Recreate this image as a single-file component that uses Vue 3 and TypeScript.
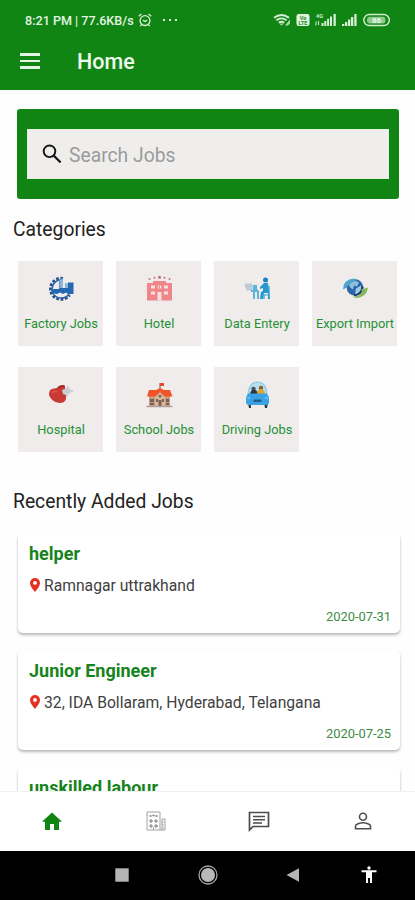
<script setup lang="ts">
interface Category {
  id: string
  label: string
}

interface Job {
  title: string
  place: string
  date: string
}

const categories: Category[] = [
  { id: 'factory', label: 'Factory Jobs' },
  { id: 'hotel', label: 'Hotel' },
  { id: 'data', label: 'Data Entery' },
  { id: 'export', label: 'Export Import' },
  { id: 'hospital', label: 'Hospital' },
  { id: 'school', label: 'School Jobs' },
  { id: 'driving', label: 'Driving Jobs' },
]

const jobs: Job[] = [
  { title: 'helper', place: 'Ramnagar uttrakhand', date: '2020-07-31' },
  { title: 'Junior Engineer', place: '32, IDA Bollaram, Hyderabad, Telangana', date: '2020-07-25' },
  { title: 'unskilled labour', place: '', date: '' },
]
</script>

<template>
  <div class="screen">
    <header class="top">
      <div class="status">
        <span class="clock">8:21 PM | 77.6KB/s</span>
        <svg class="alarm" width="14" height="14" viewBox="0 0 14 14" fill="none" stroke="#d9f0d9" stroke-width="1.3">
          <circle cx="7" cy="7.6" r="4.9" />
          <path d="M.8 3.2 3.4 1M13.2 3.2 10.6 1M3.5 11.6l-1.2 1.5M10.5 11.6l1.2 1.5M4.8 7.2 7 8.4l2.2-1.2" />
        </svg>
        <span class="dots"><i></i><i></i><i></i></span>
        <svg class="signals" width="118" height="14" viewBox="0 0 118 14">
          <g fill="none" stroke="#d5eed5" stroke-width="1.9">
            <path d="M1 4.8Q8.5-1 16 4.8M3.4 7.3q5.1-3.8 10.2 0M5.8 9.7q2.7-2 5.4 0" />
          </g>
          <path d="M6.5 10.5h4l-2 2.3zM12 12.5l5-6v4l-2 2z" fill="#a9d9a9" />
          <rect x="23.5" y="1" width="13" height="12" rx="2.2" fill="#dff3df" />
          <text x="30" y="6.7" class="micro dark">Vo</text>
          <text x="30" y="11.7" class="micro dark">LTE</text>
          <text x="46.5" y="5" class="micro">4G</text>
          <path d="M43 8.500v4M45.500 12V8" stroke="#b5dfb5" stroke-width="1.2" />
          <g fill="#d5eed5">
            <path d="M48.500 10h2v3h-2zM51.300 8h2v5h-2zM54.100 5.800h2V13h-2zM57 3.500h2V13h-2zM60.500 1h2.300v12h-2.300z" />
            <path d="M69 11h2.300v2H69zM72 9h2.300v4H72zM75 6.500h2.300V13H75zM78 4h2.300v9H78zM81.300 1h2.300v12h-2.300z" />
          </g>
          <rect x="90.800" y="1.600" width="25.500" height="11" rx="5.500" fill="none" stroke="#cfebcf" stroke-width="1.500" />
          <rect x="94" y="3.700" width="18.500" height="6.800" rx="3" fill="#8fcb8f" />
          <text x="103.500" y="10" class="battery">86</text>
        </svg>
      </div>
      <div class="bar">
        <span class="menu"><i></i><i></i><i></i></span>
        <h1>Home</h1>
      </div>
    </header>

    <main class="content">
      <section class="search-panel">
        <div class="search">
          <svg width="20" height="20" viewBox="0 0 20 20" fill="none" stroke="#161616" stroke-width="1.900">
            <circle cx="7.500" cy="7.300" r="5.800" />
            <path d="m11.600 11.500 7 7" stroke-width="2.300" />
          </svg>
          <span>Search Jobs</span>
        </div>
      </section>

      <h2 class="categories-title">Categories</h2>
      <section class="grid">
        <div v-for="c in categories" :key="c.id" class="tile">
          <svg class="art" width="28" height="28" viewBox="0 0 28 28">
            <g v-if="c.id === 'factory'">
              <path d="M16 3.500A10.500 10.500 0 1 0 22.500 20" fill="none" stroke="#244f86" stroke-width="3" stroke-dasharray="2.600 1.700" />
              <path d="M16 5A9.300 9.300 0 0 0 5 14M6 18a9.300 9.300 0 0 0 16 1" fill="none" stroke="#3166a8" stroke-width="1.500" />
              <path d="M3.500 14H12V6.500l2-1V2h2v11h2V9h2v4h1V7.500h5.500V19H21l-2-1.500-3 1.500-3-1.500L10 19l-5-1z" fill="#2468b1" />
              <path d="M12.500 5v8H16V3.500zM18 8v5h3V8z" fill="#8db6da" />
            </g>
            <g v-else-if="c.id === 'hotel'">
              <path d="M2 8h6V6h13v2h6v17.500H2z" fill="#f0868a" />
              <path d="M6 10.500h4v3H6zM12.800 10.500h3.500v3h-3.500zM19 10.500h4v3h-4zM6 16.500h4v3H6zM19 16.500h4v3h-4zM12.500 17h4v8.500h-4z" fill="#f4e2e1" />
              <path d="M14.500 10.500v3" stroke="#f0868a" />
              <g fill="#c96d73"><circle cx="4.500" cy="4" r="1" /><circle cx="9.500" cy="2.800" r="1" /><circle cx="14.500" cy="2.200" r="1.500" /><circle cx="19.500" cy="2.800" r="1" /><circle cx="24.500" cy="4" r="1" /></g>
            </g>
            <g v-else-if="c.id === 'data'">
              <path d="M2 9h7v6H4zM2 11.500h7M5 9v6M7.500 9v6" fill="#c8d5dd" stroke="#afc0ca" stroke-width=".7" />
              <path d="M10 10h4v4l2 2v8h-2v-7h-2v7h-2zM8 15h7v2H8z" fill="#5bb5dd" />
              <circle cx="22.500" cy="5" r="2.500" fill="#1784bd" />
              <path d="M21 8h4l1 7 1 9h-2v-6h-4l-1 6h-3l1-7 2-1v-3l-3 1v-2z" fill="#2797cf" />
              <path d="M26 11v9h-5v4" fill="none" stroke="#32a5d4" stroke-width="1.200" />
            </g>
            <g v-else-if="c.id === 'export'">
              <circle cx="14" cy="12.500" r="8.300" fill="#2b65a5" />
              <path d="M8 9.500q5-6 10-2l-2 4-3-1-1 4-3-2z" fill="#8ebfe2" />
              <path d="m15 13.500 5-3 1 4-4 5-3-1z" fill="#9bcce6" />
              <path d="M13 20.500q8-1 8.500-9" fill="none" stroke="#26356b" stroke-width="2.200" />
              <path d="M2 14.500Q2 4.500 13 3.500l4 1.500Q9 6 6 12.500z" fill="#4ea6ce" />
              <path d="m20 14.500 7-2q-1 9-11 10.500-3-.2-4-1.500 7 0 9-5z" fill="#83b85b" />
            </g>
            <g v-else-if="c.id === 'hospital'">
              <path d="m15 8 4-1 2-3 1.500 4 5 2-5 2-2.500 4-5-3-1-3z" fill="#c9cfd2" />
              <path d="M11 6q4-3 7-1v3l-3 1 1 4 3 1q1 8-6 8C8 22 3 18 2 13.500q0-6 5-6 2 0 4-1.500z" fill="#c73a36" />
              <path d="M11.500 6.500Q15 4 17.500 5.500" fill="none" stroke="#a3272a" stroke-width="2" />
              <path d="M5 12q2-3 5-1" fill="none" stroke="#df5851" stroke-width="1.500" />
            </g>
            <g v-else-if="c.id === 'school'">
              <path d="M15 9V2" stroke="#70524b" />
              <path d="M15 2h4v3h-4z" fill="#e44832" />
              <path d="M4 14h21v11H4z" fill="#c99d82" />
              <path d="M4 9h7l4-2 4 2h6l2.500 6.500H2z" fill="#f15428" />
              <path d="m10 16 5-5 5 5v9H10z" fill="#d9b798" />
              <circle cx="15" cy="15" r="1.500" fill="#8a6250" />
              <path d="M5 18h4v3H5zM11 18h2v3h-2zM17 18h2v3h-2zM21 18h3v3h-3zM13.500 19h3v6h-3zM5 22h4v2H5zM21 22h3v2h-3z" fill="#766159" />
              <path d="M1.500 25.500h26" stroke="#b39e96" stroke-width="1.500" />
            </g>
            <g v-else>
              <path d="M5 13Q6 1 14.500 1T24 13z" fill="#b5dfee" stroke="#8acbe5" stroke-width="1.200" />
              <circle cx="10.500" cy="8" r="2.200" fill="#4b4e58" />
              <circle cx="18" cy="7" r="2.200" fill="#8c5d36" />
              <path d="M7 14q0-5 4-5t4 5z" fill="#2c3344" />
              <path d="M14 14q0-6 4-6t4 6z" fill="#e8a130" />
              <path d="M5 22h3v5H6zM21 22h4l-1 5h-2z" fill="#303b45" />
              <path d="m5 12.500h19l2 4v5.500q-1 2-3 2H6q-3 0-3-3v-4.500z" fill="#3aa2e4" />
              <path d="M10.500 18.500h8v2.500h-8z" fill="#235c89" />
              <path d="M4 17h3M22 17h3" stroke="#6fc9f0" stroke-width="1.500" />
            </g>
          </svg>
          <span class="tile-label">{{ c.label }}</span>
        </div>
      </section>

      <h2 class="recent-title">Recently Added Jobs</h2>
      <section class="jobs">
        <article v-for="job in jobs" :key="job.title" class="job">
          <h3>{{ job.title }}</h3>
          <p v-if="job.place" class="place">
            <svg width="10" height="14" viewBox="0 0 10 14">
              <path fill="#e53024" fill-rule="evenodd" d="M5 0a5 5 0 0 0-5 5c0 3.500 5 9 5 9s5-5.500 5-9a5 5 0 0 0-5-5zm0 3a1.900 1.900 0 1 1 0 3.800A1.900 1.900 0 0 1 5 3z" />
            </svg>
            <span>{{ job.place }}</span>
          </p>
          <time v-if="job.date">{{ job.date }}</time>
        </article>
      </section>
    </main>

    <nav class="tabs">
      <div>
        <svg width="20" height="19" viewBox="0 0 20 19"><path d="M10 .5 0 9.800h3V18h5v-6h4v6h5V9.800h3z" fill="#118514" /></svg>
      </div>
      <div>
        <svg width="20" height="20" viewBox="0 0 20 20" fill="none" stroke="#a2a2a2" stroke-width="1">
          <path d="M1 19V1h13v18M1 19h18V8h-3v11M.5 4h1M7.500 19v-3M16 11h2M16 14h2M16 17h2" />
          <path d="M3.500 5h2M6.500 4.500h2M9.500 5h2" stroke="#777" stroke-width="1.500" />
          <path d="M4 9h2v2H4zM9 9h2v2H9zM4 14h2v2H4zM9 14h2v2H9z" stroke="#7c7c7c" />
        </svg>
      </div>
      <div>
        <svg width="22" height="21" viewBox="0 0 22 21" fill="none" stroke="#4c4c4c" stroke-width="1.700">
          <path d="M1.500 19V1.500h19v14H5z" />
          <path d="M5 5.500h12M5 8.700h12M5 12h9" stroke-width="1.500" />
        </svg>
      </div>
      <div>
        <svg width="18" height="18" viewBox="0 0 18 18" fill="none" stroke="#4f4f4f" stroke-width="1.600">
          <circle cx="9" cy="4.800" r="3.500" />
          <path d="M1.500 16.800V14C1.500 12 6 10.800 9 10.800s7.500 1.200 7.500 3.200v2.800z" />
        </svg>
      </div>
    </nav>

    <footer class="system">
      <span class="gap"></span>
      <svg width="14" height="14" viewBox="0 0 14 14"><path d="M.3.3h13.400v13.400H.3z" fill="#b5b5b5" /></svg>
      <svg width="20" height="20" viewBox="0 0 20 20"><circle cx="10" cy="10" r="9" fill="none" stroke="#a5a5a5" stroke-width="1.300" /><circle cx="10" cy="10" r="7" fill="#b9b9b9" /></svg>
      <svg width="14" height="14" viewBox="0 0 14 14"><path d="M13 .2v13.600L.5 7z" fill="#b5b5b5" /></svg>
      <svg width="16" height="18" viewBox="0 0 16 18"><circle cx="8" cy="2" r="1.700" fill="#fff" /><path d="M.5 4.200h15v2H11V17H9v-5H7v5H5V6.200H.5z" fill="#fff" /></svg>
    </footer>
  </div>
</template>

<style>
body { background: #fff; }
</style>

<style scoped>
* { box-sizing: border-box; }
.screen { width: 415px; height: 900px; display: flex; flex-direction: column; overflow: hidden; background: #fefefe; font-family: Roboto, "Liberation Sans", sans-serif; color: #222; }
h1, h2, h3, p { margin: 0; font-weight: 400; }
svg { display: block; flex: none; }
.top { flex: none; height: 90px; background: #118514; }
.status { height: 40px; padding: 0 24px 0 25px; display: flex; align-items: center; }
.clock { width: 109px; font-size: 12.600px; font-weight: 500; white-space: nowrap; color: #e2f4e2; }
.alarm { margin-left: 4px; }
.dots { display: flex; gap: 4px; margin-left: 11px; }
.dots i { width: 2px; height: 2px; background: #d9f0d9; }
.signals { margin-left: auto; }
.micro { font-size: 5.500px; font-weight: 700; text-anchor: middle; fill: #d5eed5; }
.dark { fill: #278a29; }
.battery { font-size: 8px; font-weight: 700; text-anchor: middle; fill: #eefaee; }
.bar { height: 44px; padding-left: 20px; display: flex; align-items: center; }
.menu { width: 20px; display: flex; flex-direction: column; gap: 4px; margin-top: -2px; }
.menu i { height: 2.500px; background: #e2f4e2; }
h1 { margin-left: 37px; font-size: 21.500px; line-height: 26px; font-weight: 500; color: #effaef; }
.content { flex: none; height: 701px; overflow: hidden; padding-top: 19px; }
.search-panel { margin: 0 16px 0 17px; height: 90px; padding: 20px 10px; background: #118514; border-radius: 3px; }
.search { height: 50px; padding-left: 14px; display: flex; align-items: center; background: #efeeed; font-size: 19.300px; color: #9b9b9b; border: 1px solid #e2efe0; }
.search span { margin-left: 7px; padding-top: 2px; }
h2 { margin-left: 13px; font-size: 19.300px; line-height: 24px; white-space: nowrap; }
.categories-title { margin-top: 19px; }
.grid { margin: 19px 0 0 18px; display: grid; grid-template-columns: repeat(4, 85px); column-gap: 13px; row-gap: 21px; }
.tile { height: 85px; padding: 14px 0 0 1px; display: flex; flex-direction: column; align-items: center; background: #efeceb; }
.tile-label { margin-top: 12px; font-size: 12.800px; line-height: 18px; white-space: nowrap; color: #279036; }
.recent-title { margin-top: 38px; }
.jobs { margin: 19px 15px 0 18px; display: flex; flex-direction: column; gap: 17px; }
.job { height: 100px; flex: none; padding: 10px 9px 0 11px; display: flex; flex-direction: column; background: #fff; border-radius: 5px; box-shadow: 0 2px 3px rgba(0, 0, 0, .28); }
h3 { font-size: 18px; line-height: 22px; font-weight: 700; color: #16841b; }
.place { margin-top: 10px; height: 20px; display: flex; align-items: center; gap: 4px; padding-left: 1px; font-size: 15.700px; color: #414141; white-space: nowrap; }
time { margin-top: 13px; align-self: flex-end; font-size: 12.900px; line-height: 18px; color: #3e8b44; }
.tabs { flex: none; height: 60px; display: grid; grid-template-columns: repeat(4, 1fr); background: #fff; border-top: 1px solid #f1f1f1; padding-bottom: 1px; }
.tabs div { display: flex; align-items: center; justify-content: center; }
.system { flex: 1; display: flex; align-items: center; background: #000; padding: 0 38px 1px 0; }
.system .gap { width: 115px; }
.system svg:nth-of-type(2) { margin-left: 69px; }
.system svg:nth-of-type(3) { margin-left: 68px; }
.system svg:nth-of-type(4) { margin-left: auto; }
</style>
